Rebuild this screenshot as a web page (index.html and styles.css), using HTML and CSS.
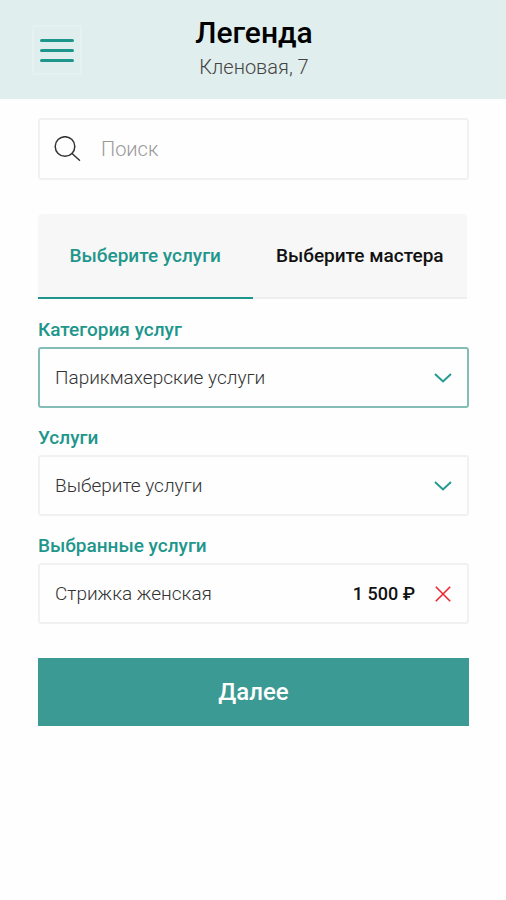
FILE: index.html
```html
<!DOCTYPE html>
<html lang="ru">
<head>
<meta charset="utf-8">
<meta name="viewport" content="width=device-width, initial-scale=1">
<title>Легенда</title>
<link rel="stylesheet" href="styles.css">
</head>
<body>
<header class="header">
  <button class="menu" type="button" aria-label="Меню">
    <svg width="34" height="26" viewBox="0 0 34 26" fill="none" stroke="currentColor" stroke-width="3" stroke-linecap="round"><path d="M1.5 3.5h31M1.5 13.5h31M1.5 23.5h31"/></svg>
  </button>
  <div class="place">
    <h1 class="place-name">Легенда</h1>
    <p class="place-address">Кленовая, 7</p>
  </div>
</header>
<main class="page">
  <label class="box search">
    <svg width="27" height="26" viewBox="0 0 27 26" fill="none" stroke="currentColor" stroke-width="1.5" stroke-linecap="round"><circle cx="11" cy="10.5" r="9.8"/><path d="M18 17.5l7.5 6.7"/></svg>
    <input class="search-input" type="search" placeholder="Поиск" aria-label="Поиск">
  </label>
  <nav class="tabs">
    <button class="tab tab-active" type="button">Выберите услуги</button>
    <button class="tab" type="button">Выберите мастера</button>
  </nav>
  <form class="form">
    <div class="field">
      <label class="caption" for="category">Категория услуг</label>
      <div class="picker">
        <select class="box select select-active" id="category"><option>Парикмахерские услуги</option></select>
        <svg class="chevron" width="18" height="10" viewBox="0 0 18 10" fill="none" stroke="currentColor" stroke-width="2"><path d="M1 1l8 7.500L17 1"/></svg>
      </div>
    </div>
    <div class="field">
      <label class="caption" for="services">Услуги</label>
      <div class="picker">
        <select class="box select" id="services"><option>Выберите услуги</option></select>
        <svg class="chevron" width="18" height="10" viewBox="0 0 18 10" fill="none" stroke="currentColor" stroke-width="2"><path d="M1 1l8 7.500L17 1"/></svg>
      </div>
    </div>
    <section class="field">
      <h2 class="caption">Выбранные услуги</h2>
      <div class="box chosen">
        <span class="chosen-name">Стрижка женская</span>
        <span class="chosen-price">1 500 ₽</span>
        <button class="remove" type="button" aria-label="Удалить">
          <svg width="16" height="16" viewBox="0 0 16 16" fill="none" stroke="currentColor" stroke-width="1.6"><path d="M.8.8l14.400 14.400M15.200.8L.8 15.200"/></svg>
        </button>
      </div>
    </section>
    <button class="next" type="submit">Далее</button>
  </form>
</main>
</body>
</html>
```
FILE: styles.css
```css
* {
  box-sizing: border-box;
}

body {
  margin: 0;
  background: #fefefe;
  color: #111;
  font: 300 19px/24px Roboto, sans-serif;
}

button,
input,
select {
  margin: 0;
  padding: 0;
  border: 0;
  background: none;
  color: inherit;
  font: inherit;
}

svg {
  display: block;
}

.header {
  display: grid;
  grid-template-columns: 50px 1fr 50px;
  align-items: center;
  padding: 15px 30px 15px 32px;
  background: #e0eeed;
}

.menu {
  display: grid;
  place-items: center;
  height: 50px;
  border: 2px solid #e6f2f1;
  border-radius: 2px;
  color: #1f968c;
}

.place {
  padding-bottom: 5px;
  text-align: center;
}

.place-name {
  margin: 0;
  color: #000;
  font-size: 30px;
  font-weight: 500;
  line-height: 36px;
}

.place-address {
  margin: 0;
  padding-top: 4px;
  color: #444;
  font-size: 20px;
}

.page {
  padding: 19px 37px 19px 38px;
}

.box {
  width: 100%;
  height: 61px;
  border: 2px solid #f1f1f1;
  border-radius: 3px;
  background: #fefefe;
}

.search {
  display: flex;
  align-items: center;
  gap: 20px;
  padding: 0 14px;
  height: 62px;
  color: #333;
}

.search-input {
  flex: 1;
  min-width: 0;
  outline: 0;
  font-size: 20px;
}

.search-input::placeholder {
  color: #999;
  opacity: 1;
}

.tabs {
  display: grid;
  grid-template-columns: 1fr 1fr;
  margin: 34px 2px 19px 0;
  border-radius: 4px 4px 0 0;
  background: #f7f7f7;
}

.tab {
  height: 85px;
  border-bottom: 2px solid #eee;
  font-weight: 500;
}

.tab-active {
  border-color: #1f968c;
  color: #1f968c;
}

.form {
  display: grid;
  gap: 18px;
}

.field {
  display: grid;
  gap: 5px;
}

.caption {
  margin: 0;
  color: #1f968c;
  font-size: 19px;
  font-weight: 500;
}

.picker {
  display: grid;
  align-items: center;
}

.picker > * {
  grid-area: 1 / 1;
}

.select {
  appearance: none;
  padding: 0 44px 0 15px;
  color: #333;
}

.select-active {
  border-color: #83bdb6;
}

.chevron {
  justify-self: end;
  margin-right: 17px;
  color: #259a90;
  pointer-events: none;
}

.chosen {
  display: flex;
  align-items: center;
  padding: 0 16px 0 15px;
}

.chosen-name {
  flex: 1;
  color: #333;
}

.chosen-price {
  font-size: 18px;
  font-weight: 500;
}

.remove {
  margin-left: 20px;
  color: #ee2630;
}

.next {
  height: 68px;
  margin-top: 16px;
  background: #3b9a94;
  color: #fff;
  font-size: 24px;
  font-weight: 500;
}
```
